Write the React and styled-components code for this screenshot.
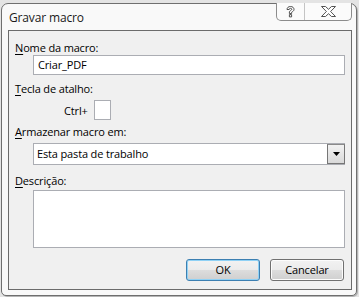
import React from "react";
import styled, { createGlobalStyle } from "styled-components";

const Global = createGlobalStyle`
  html, body { margin: 0; padding: 0; }
  body {
    background: #e4e4e4;
    width: 359px;
    height: 297px;
    overflow: hidden;
    font-family: "Segoe UI", "Open Sans", "Noto Sans", sans-serif;
    font-size: 11px;
    letter-spacing: -0.15px;
    color: #000;
  }
`;

const Frame = styled.div`
  box-sizing: border-box;
  margin: 3px 0 0 1px;
  width: 356px;
  height: 293px;
  border: 1px solid #6f6f6f;
  border-radius: 7px 7px 5px 5px;
  background: #f9f9f9;
  box-shadow: 1px 1px 0 #b5b5b5;
  display: flex;
  flex-direction: column;
  padding: 0 4px 6px 6px;
`;

const TitleBar = styled.div`
  height: 26px;
  display: flex;
  align-items: flex-start;
  justify-content: space-between;
  flex-shrink: 0;
`;

const Title = styled.div`
  padding: 7px 0 0 1px;
  font-size: 12px;
  line-height: 14px;
  color: #1a1a1a;
`;

const CaptionButtons = styled.div`
  display: flex;
  height: 17px;
  margin-top: -1px;
  border: 1px solid #8c8c8c;
  border-top: none;
  border-radius: 0 0 5px 5px;
  background: #fbfbfb;
`;

const CaptionButton = styled.div`
  width: ${(p) => p.$w}px;
  display: flex;
  align-items: center;
  justify-content: center;
  border-left: ${(p) => (p.$divider ? "1px solid #c4c4c4" : "none")};
`;

const Panel = styled.div`
  flex: 1;
  box-sizing: border-box;
  border: 1px solid #6b6b6b;
  background: #f0f0f0;
  padding: 9px 6px 8px 6px;
  display: flex;
  flex-direction: column;
`;

const Label = styled.div`
  line-height: 15px;
  height: 15px;
  margin-top: ${(p) => p.$mt || 0}px;
  margin-bottom: ${(p) => p.$mb || 0}px;
  white-space: nowrap;
`;

const TextBox = styled.div`
  box-sizing: border-box;
  margin-left: 18px;
  height: ${(p) => p.$h}px;
  border: 1px solid #abadb3;
  background: #fff;
  padding: 0 4px;
  line-height: ${(p) => p.$h - 2}px;
  white-space: nowrap;
`;

const ShortcutRow = styled.div`
  display: flex;
  align-items: center;
  margin: 4px 0 4px 49px;
  height: 20px;
  gap: 6px;
`;

const KeyBox = styled.div`
  box-sizing: border-box;
  width: 17px;
  height: 20px;
  border: 1px solid #abadb3;
  background: #fff;
`;

const Select = styled.div`
  box-sizing: border-box;
  margin: 4px 0 0 18px;
  height: 22px;
  border: 1px solid #abadb3;
  background: #fff;
  display: flex;
  align-items: stretch;
`;

const SelectValue = styled.div`
  flex: 1;
  padding-left: 3px;
  line-height: 20px;
`;

const DropButton = styled.div`
  box-sizing: border-box;
  width: 18px;
  margin: 0 -1px 0 0;
  border: 1px solid #767676;
  border-top-color: #8a8a8a;
  background: linear-gradient(#f2f2f2, #d9d9d9);
  display: flex;
  align-items: center;
  justify-content: center;
`;

const ButtonRow = styled.div`
  display: flex;
  justify-content: flex-end;
  gap: 10px;
  margin-top: 11px;
  padding-right: 1px;
`;

const Button = styled.div`
  box-sizing: border-box;
  width: 74px;
  height: 22px;
  border: 1px solid ${(p) => (p.$default ? "#3c7fb1" : "#707070")};
  border-radius: 3px;
  background: linear-gradient(#f2f2f2 0%, #ebebeb 50%, #dddddd 51%, #cfcfcf 100%);
  box-shadow: ${(p) => (p.$default ? "inset 0 0 0 1px #8fd1f5" : "inset 0 0 0 1px #fcfcfc")};
  display: flex;
  align-items: center;
  justify-content: center;
  line-height: 14px;
`;

const U = styled.span`
  text-decoration: underline;
  text-underline-offset: 2px;
`;

const HelpIcon = () => (
  <svg width="9" height="12" viewBox="0 0 9 12">
    <path
      d="M1 3.5 C1 1.5 2.5 0.5 4.5 0.5 C6.5 0.5 8 1.6 8 3.4 C8 5 6.5 5.6 5.6 6.3 L5.6 7.5 L3.4 7.5 L3.4 5.8 C3.4 4.9 5.8 4.3 5.8 3.3 C5.8 2.7 5.2 2.3 4.5 2.3 C3.7 2.3 3.2 2.8 3.2 3.5 Z M3.4 8.6 L5.6 8.6 L5.6 10.9 L3.4 10.9 Z"
      fill="#fff"
      stroke="#3f3f3f"
      strokeWidth="0.9"
    />
  </svg>
);

const CloseIcon = () => (
  <svg width="15" height="11" viewBox="0 0 15 11">
    <path
      d="M0.5 0.5 L4.5 0.5 L7.5 3.3 L10.5 0.5 L14.5 0.5 L9.6 5.5 L14.5 10.5 L10.5 10.5 L7.5 7.7 L4.5 10.5 L0.5 10.5 L5.4 5.5 Z"
      fill="#fff"
      stroke="#3f3f3f"
      strokeWidth="0.9"
      strokeLinejoin="round"
    />
  </svg>
);

const Caret = () => (
  <svg width="7" height="4" viewBox="0 0 7 4">
    <path d="M0 0 L7 0 L3.5 4 Z" fill="#000" />
  </svg>
);

export default function App() {
  return (
    <>
      <Global />
      <Frame>
        <TitleBar>
          <Title>Gravar macro</Title>
          <CaptionButtons>
            <CaptionButton $w={27}>
              <HelpIcon />
            </CaptionButton>
            <CaptionButton $w={46} $divider>
              <CloseIcon />
            </CaptionButton>
          </CaptionButtons>
        </TitleBar>
        <Panel>
          <Label>
            <U>N</U>ome da macro:
          </Label>
          <TextBox $h={20}>Criar_PDF</TextBox>
          <Label $mt={6}>
            <U>T</U>ecla de atalho:
          </Label>
          <ShortcutRow>
            <span>Ctrl+</span>
            <KeyBox />
          </ShortcutRow>
          <Label>
            <U>A</U>rmazenar macro em:
          </Label>
          <Select>
            <SelectValue>Esta pasta de trabalho</SelectValue>
            <DropButton>
              <Caret />
            </DropButton>
          </Select>
          <Label $mt={8} $mb={2}>
            <U>D</U>escrição:
          </Label>
          <TextBox $h={58} />
          <ButtonRow>
            <Button $default>OK</Button>
            <Button>Cancelar</Button>
          </ButtonRow>
        </Panel>
      </Frame>
    </>
  );
}
